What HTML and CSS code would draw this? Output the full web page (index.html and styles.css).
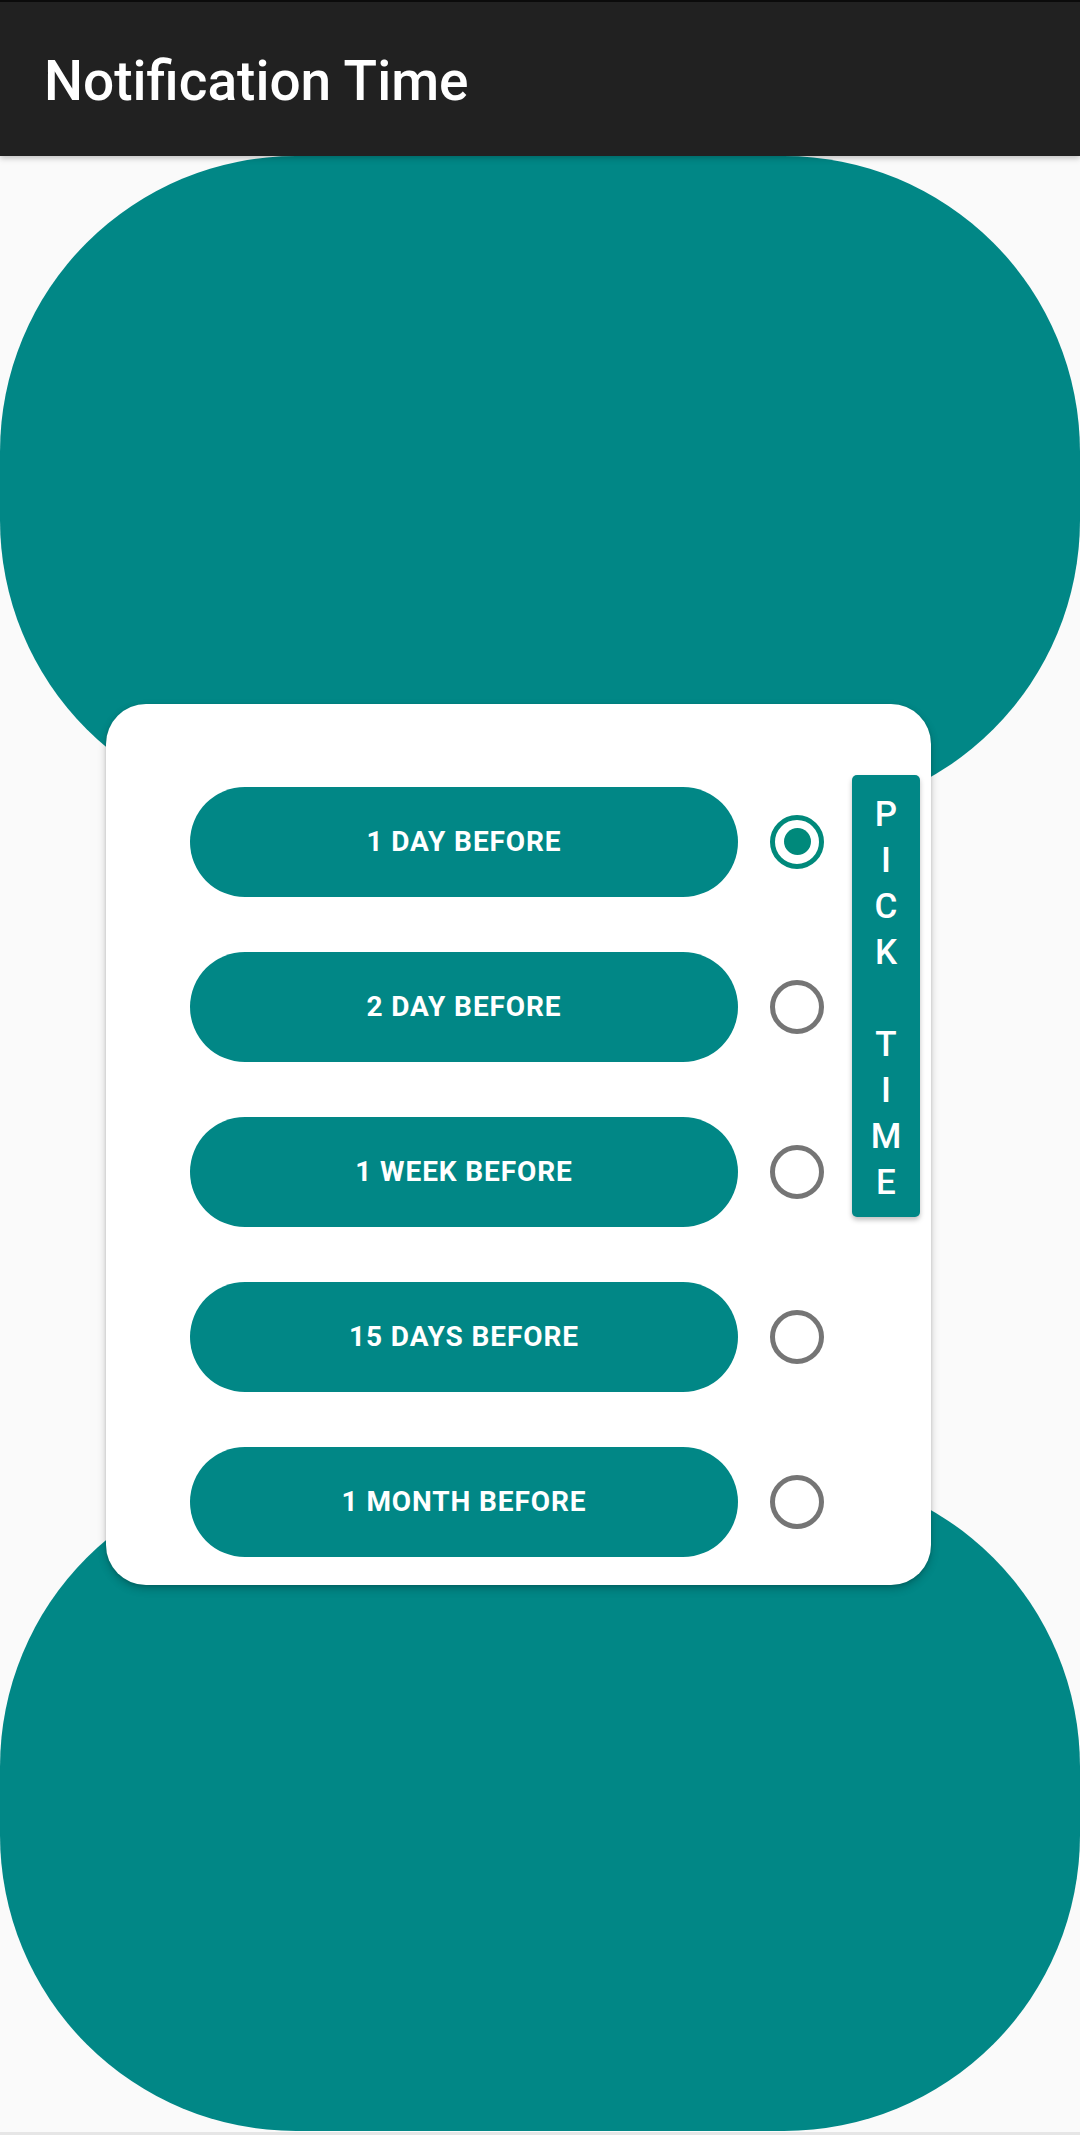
FILE: index.html
```html
<!DOCTYPE html>
<html lang="en">
<head>
<meta charset="utf-8">
<title>Notification Time</title>
<link rel="stylesheet" href="styles.css">
</head>
<body>
<header class="appbar">
  <h1 class="appbar-title">Notification Time</h1>
</header>
<main class="content">
  <div class="backdrop">
    <div class="blob"></div>
    <div class="blob"></div>
  </div>
  <section class="card">
    <div class="options">
      <div class="option">
        <button class="pill">1 DAY BEFORE</button>
        <span class="radio radio-checked"><span class="radio-dot"></span></span>
      </div>
      <div class="option">
        <button class="pill">2 DAY BEFORE</button>
        <span class="radio"></span>
      </div>
      <div class="option">
        <button class="pill">1 WEEK BEFORE</button>
        <span class="radio"></span>
      </div>
      <div class="option">
        <button class="pill">15 DAYS BEFORE</button>
        <span class="radio"></span>
      </div>
      <div class="option">
        <button class="pill">1 MONTH BEFORE</button>
        <span class="radio"></span>
      </div>
    </div>
    <button class="pick">
      <span class="pick-ch">P</span>
      <span class="pick-ch">I</span>
      <span class="pick-ch">C</span>
      <span class="pick-ch">K</span>
      <span class="pick-ch pick-gap">&nbsp;</span>
      <span class="pick-ch">T</span>
      <span class="pick-ch">I</span>
      <span class="pick-ch">M</span>
      <span class="pick-ch">E</span>
    </button>
  </section>
</main>
</body>
</html>
```

FILE: styles.css
```css
html, body {
  margin: 0;
  padding: 0;
}
body {
  width: 1080px;
  height: 2135px;
  background: #fafafa;
  font-family: Roboto, "Noto Sans", "Liberation Sans", sans-serif;
  display: flex;
  flex-direction: column;
  overflow: hidden;
}
.appbar {
  height: 156px;
  flex: 0 0 156px;
  background: #212121;
  border-top: 2px solid #0b0b0b;
  box-sizing: border-box;
  display: flex;
  align-items: center;
  padding-left: 44px;
  box-shadow: 0 2px 6px rgba(0,0,0,0.25);
  position: relative;
  z-index: 2;
}
.appbar-title {
  margin: 0;
  color: #ffffff;
  font-size: 55px;
  font-weight: 500;
  line-height: 1;
  padding-top: 4px;
}
.content {
  flex: 1 1 auto;
  display: grid;
  grid-template: 1fr / 1fr;
  border-bottom: 3px solid #e6e6e6;
}
.backdrop {
  grid-area: 1 / 1;
  display: flex;
  flex-direction: column;
  justify-content: space-between;
  padding-bottom: 1px;
}
.blob {
  height: 660px;
  background: #018786;
  border-radius: 296px;
}
.card {
  grid-area: 1 / 1;
  align-self: center;
  justify-self: start;
  margin-left: 106px;
  margin-top: 0;
  width: 825px;
  box-sizing: border-box;
  background: #ffffff;
  border-radius: 40px;
  box-shadow: 0 4px 8px rgba(0,0,0,0.22), 0 1px 3px rgba(0,0,0,0.12);
  display: flex;
  align-items: flex-start;
  padding: 71px 11px 28px 84px;
}
.options {
  margin-top: 12px;
  display: flex;
  flex-direction: column;
  gap: 55px;
}
.option {
  display: flex;
  align-items: center;
  gap: 32px;
}
.pill {
  width: 548px;
  height: 110px;
  border: none;
  border-radius: 55px;
  background: #018786;
  color: #ffffff;
  font-family: Roboto, "Noto Sans", sans-serif;
  font-weight: 700;
  font-size: 28px;
  letter-spacing: 0.9px;
  padding: 0;
}
.radio {
  width: 54px;
  height: 54px;
  box-sizing: border-box;
  border: 5px solid #757575;
  border-radius: 50%;
  display: flex;
  align-items: center;
  justify-content: center;
}
.radio-checked {
  border-color: #00897b;
}
.radio-dot {
  width: 27px;
  height: 27px;
  border-radius: 50%;
  background: #00897b;
}
.pick {
  margin-left: 28px;
  width: 68px;
  height: 442px;
  border: none;
  border-radius: 5px;
  background: #018786;
  color: #ffffff;
  box-shadow: 0 3px 5px rgba(0,0,0,0.25);
  display: flex;
  flex-direction: column;
  align-items: center;
  padding: 17px 0 0;
  box-sizing: border-box;
  font-family: Roboto, "Noto Sans", sans-serif;
  font-size: 35px;
  font-weight: 500;
}
.pick-ch {
  display: block;
  height: 46px;
  line-height: 46px;
}
```
